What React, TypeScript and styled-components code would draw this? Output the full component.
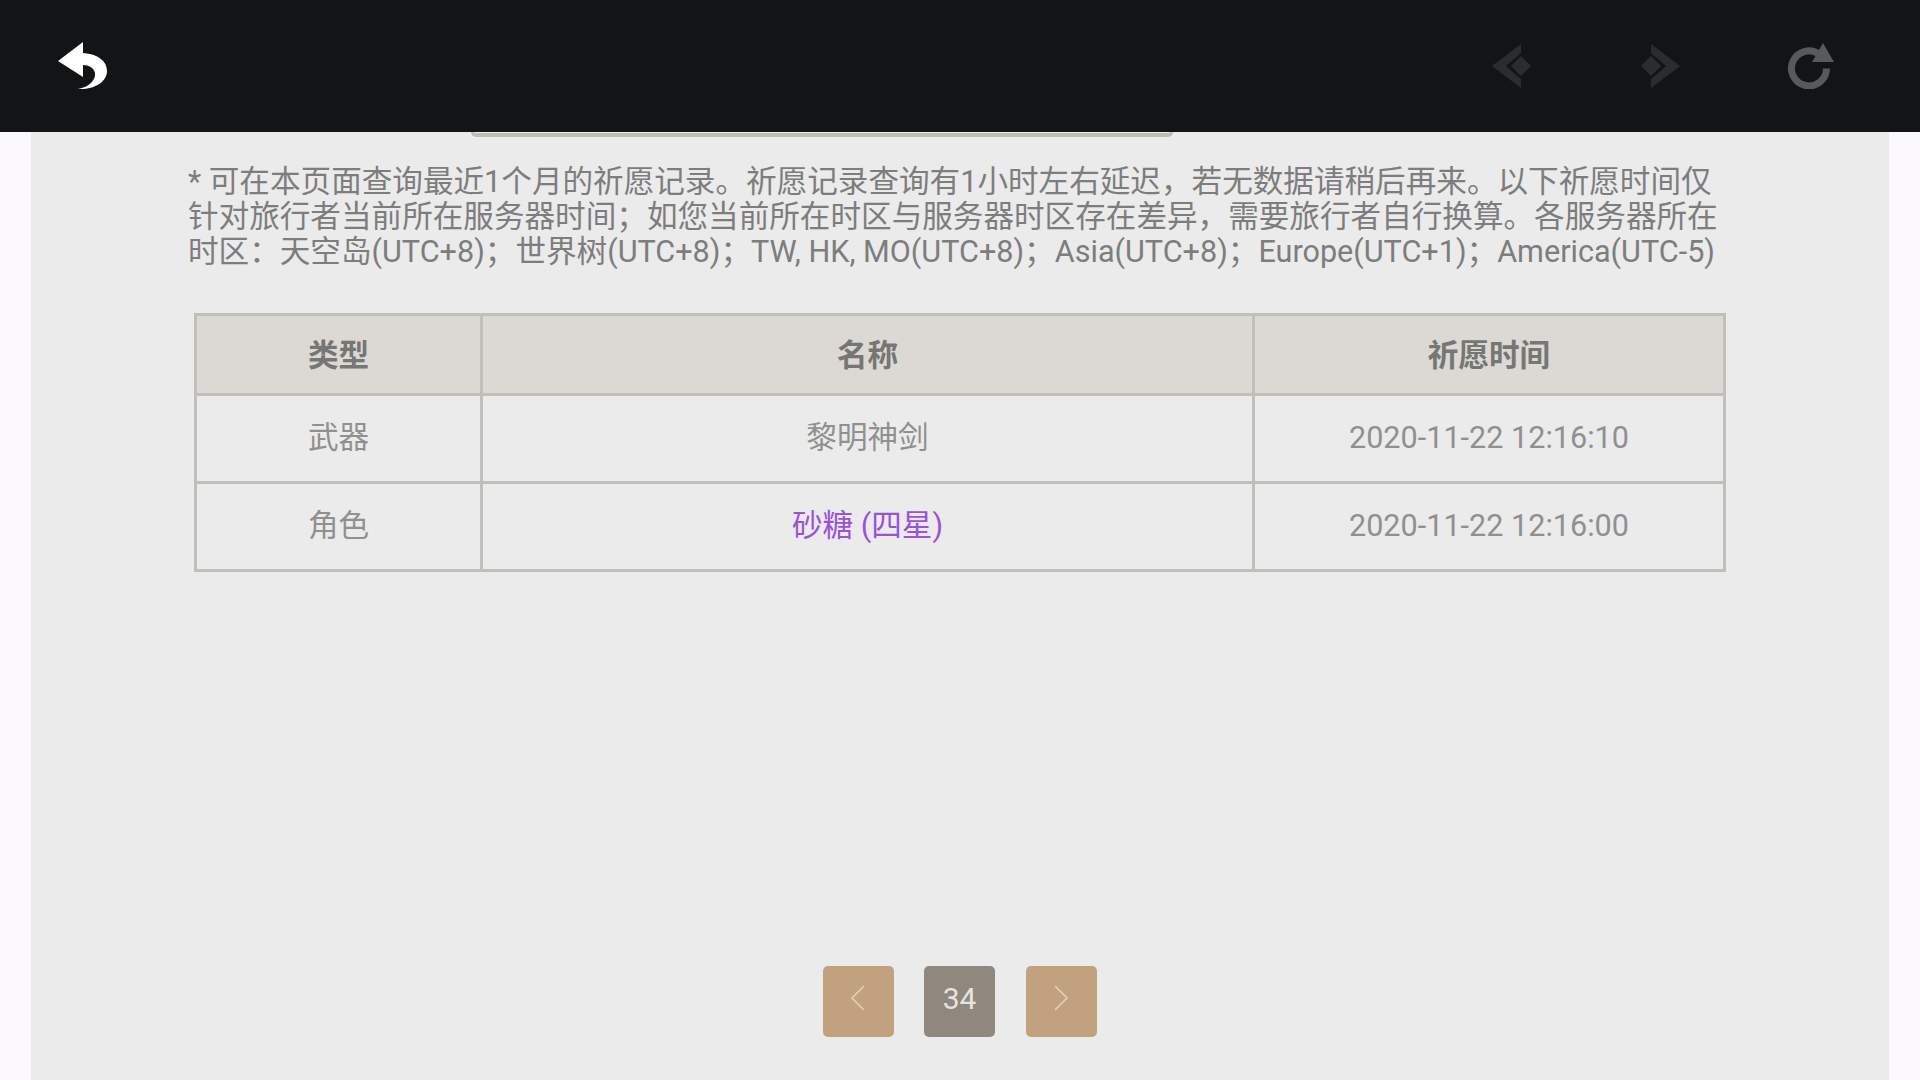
import React from 'react';
import styled, { createGlobalStyle } from 'styled-components';

const GlobalStyle = createGlobalStyle`
    html, body {
        margin: 0;
        padding: 0;
        background: #fbf9fe;
    }
    body {
        font-family: Roboto, "Noto Sans CJK SC", sans-serif;
    }
`;

const BackIcon = () => (
    <svg width="50" height="48" viewBox="0 0 50 48">
        <path
            d="M0 19 L25 0 L25 11 C40 12 49 19 49 29 C49 40 36 48 20 47 C31 45 38 38 37 31 C36 26 31 23 25 23 L25 35 Z"
            fill="#ffffff"
        />
    </svg>
);

const PrevIcon = () => (
    <svg width="42" height="46" viewBox="1 -1 42 46">
        <path d="M1 22 L30 0 L30 9 C25 13 20 18 15 22 C20 27 25 31 30 35 L30 44 Z" fill="#2b2c2e" />
        <path d="M20 22 L30 12 L40 22 L30 32 Z" fill="#2b2c2e" />
    </svg>
);

const NextIcon = () => (
    <svg width="42" height="46" viewBox="1 -1 42 46">
        <path d="M41 22 L12 0 L12 9 C17 13 22 18 27 22 C22 27 17 31 12 35 L12 44 Z" fill="#2b2c2e" />
        <path d="M22 22 L12 12 L2 22 L12 32 Z" fill="#2b2c2e" />
    </svg>
);

const ReloadIcon = () => (
    <svg width="46" height="46" viewBox="0 0 46 46">
        <path d="M31 11 A17.5 17.5 0 1 0 38.5 25.5" fill="none" stroke="#58595b" strokeWidth="7" />
        <path d="M24 19 L35 0 L46 19 Z" fill="#58595b" />
    </svg>
);

const rows = [
    { type: '武器', name: '黎明神剑', time: '2020-11-22 12:16:10', star: false },
    { type: '角色', name: '砂糖 (四星)', time: '2020-11-22 12:16:00', star: true },
];

export default function App() {
    return (
        <Page>
            <GlobalStyle />
            <TopBar>
                <BarButton>
                    <BackIcon />
                </BarButton>
                <BarNav>
                    <PrevIcon />
                    <NextIcon />
                    <ReloadIcon />
                </BarNav>
            </TopBar>
            <Content>
                <FilterEdge />
                <Notice>
                    * 可在本页面查询最近1个月的祈愿记录。祈愿记录查询有1小时左右延迟，若无数据请稍后再来。以下祈愿时间仅针对旅行者当前所在服务器时间；如您当前所在时区与服务器时区存在差异，需要旅行者自行换算。各服务器所在时区：天空岛(UTC+8)；世界树(UTC+8)；TW, HK, MO(UTC+8)；Asia(UTC+8)；Europe(UTC+1)；America(UTC-5)
                </Notice>
                <Table>
                    <thead>
                        <tr>
                            <HeadCell>类型</HeadCell>
                            <HeadCell>名称</HeadCell>
                            <HeadCell>祈愿时间</HeadCell>
                        </tr>
                    </thead>
                    <tbody>
                        {rows.map((row) => (
                            <tr key={row.time}>
                                <Cell>{row.type}</Cell>
                                <Cell $star={row.star}>{row.name}</Cell>
                                <Cell>{row.time}</Cell>
                            </tr>
                        ))}
                    </tbody>
                </Table>
                <Pager>
                    <PageButton>
                        <svg width="16" height="26" viewBox="0 0 16 26">
                            <path d="M14 1 L2 13 L14 25" fill="none" stroke="#e2cfb9" strokeWidth="1.6" />
                        </svg>
                    </PageButton>
                    <PageNumber>34</PageNumber>
                    <PageButton>
                        <svg width="16" height="26" viewBox="0 0 16 26">
                            <path d="M2 1 L14 13 L2 25" fill="none" stroke="#e2cfb9" strokeWidth="1.6" />
                        </svg>
                    </PageButton>
                </Pager>
            </Content>
        </Page>
    );
}

const Page = styled.div`
    display: flex;
    flex-direction: column;
    height: 1080px;
    overflow: hidden;
`;

const TopBar = styled.div`
    align-items: center;
    background: #131416;
    display: flex;
    flex: 0 0 132px;
    justify-content: space-between;
    padding: 0 86px 0 58px;
`;

const BarButton = styled.div`
    display: flex;
`;

const BarNav = styled.div`
    align-items: center;
    display: flex;
    gap: 106px;
`;

const Content = styled.div`
    background: #ebebeb;
    display: flex;
    flex: 1;
    flex-direction: column;
    margin: 0 31px;
    position: relative;
`;

const FilterEdge = styled.div`
    border: solid #c0bdb6;
    border-radius: 0 0 5px 5px;
    border-width: 0 3px 4px;
    box-sizing: border-box;
    height: 5px;
    margin-left: 440px;
    width: 702px;
`;

const Notice = styled.p`
    color: #7d7d7d;
    font-size: 30.6px;
    line-height: 35px;
    margin: 27px 0 0 157px;
    width: 1540px;
`;

const Table = styled.table`
    border-collapse: collapse;
    color: #909090;
    font-size: 30.6px;
    line-height: 35px;
    margin: 44px 0 0 163px;
    table-layout: fixed;
    width: 1532px;
`;

const HeadCell = styled.th`
    background: #dcd9d4;
    border: 3px solid #c0bfba;
    color: #767674;
    font-weight: 700;
    height: 75px;
    padding: 2px 0 0;

    &:nth-child(1) {
        width: 283px;
    }

    &:nth-child(2) {
        width: 769px;
    }
`;

const Cell = styled.td<{ $star?: boolean }>`
    border: 3px solid #c0bfba;
    color: ${({ $star }) => ($star ? '#9b52d8' : 'inherit')};
    height: 83px;
    padding: 0 0 2px;
    text-align: center;
`;

const Pager = styled.div`
    display: flex;
    gap: 30.5px;
    justify-content: center;
    margin-top: auto;
    padding: 0 1px 43px 0;
`;

const PageButton = styled.div`
    align-items: center;
    background: #c1a17e;
    border-radius: 5px;
    box-sizing: border-box;
    display: flex;
    height: 71px;
    justify-content: center;
    padding-bottom: 7px;
    width: 71px;
`;

const PageNumber = styled(PageButton)`
    background: #90877f;
    color: #e6e4e1;
    font-size: 30px;
`;
